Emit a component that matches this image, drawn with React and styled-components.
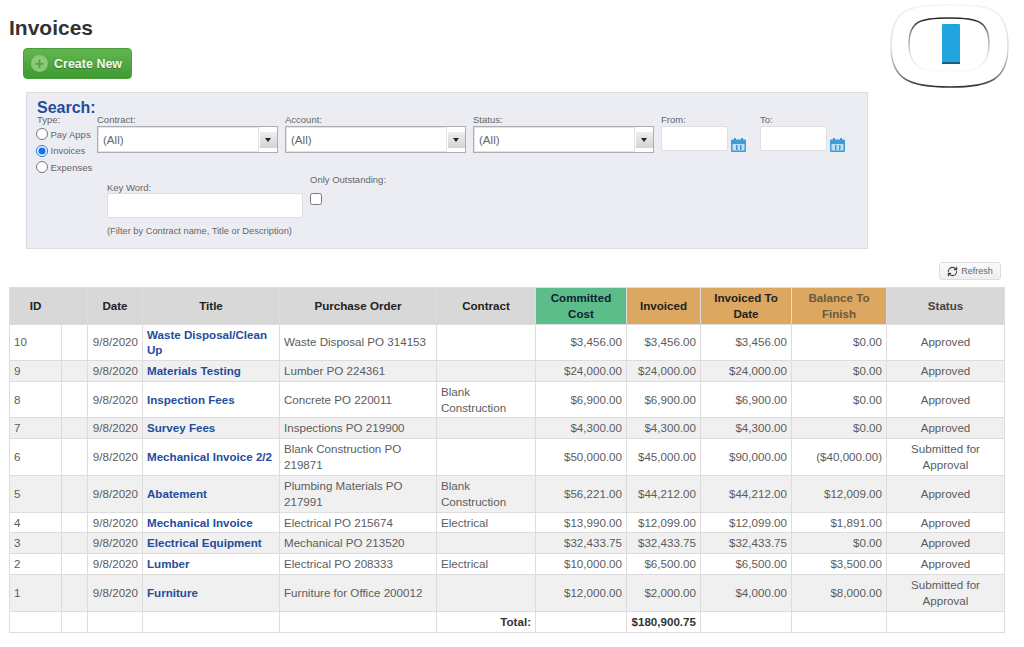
import React from 'react';
import styled, { createGlobalStyle } from 'styled-components';
import { RefreshCw } from 'lucide-react';

const GlobalStyle = createGlobalStyle`
  html, body {
    margin: 0;
    padding: 0;
    background: #fff;
  }
  body {
    font-family: "Liberation Sans", Arial, sans-serif;
    color: #555;
  }
`;

const Page = styled.div`
  width: 1024px;
  height: 647px;
  overflow: hidden;
  box-sizing: border-box;
  padding: 0 19px 0 9px;
`;

const Header = styled.header`
  display: flex;
  justify-content: space-between;
  height: 92px;
`;

const HeaderLeft = styled.div`
  display: flex;
  flex-direction: column;
  align-items: flex-start;
`;

const PageTitle = styled.h1`
  margin: 16px 0 1px;
  font-size: 21px;
  line-height: 23px;
  font-weight: bold;
  color: #333;
`;

const CreateButton = styled.button`
  display: flex;
  align-items: center;
  gap: 6px;
  width: 109px;
  height: 31px;
  margin: 8px 0 0 14px;
  padding: 0 0 0 7px;
  border: 1px solid #4b9c3d;
  border-radius: 4px;
  background: linear-gradient(#62b650, #3f9a33);
  color: #f1f8ee;
  font-family: inherit;
  font-size: 12.5px;
  font-weight: bold;
  white-space: nowrap;
  text-shadow: 0 1px 1px rgba(0, 0, 0, 0.3);
`;

const PlusCircle = styled.span`
  display: flex;
  align-items: center;
  justify-content: center;
  width: 17px;
  height: 17px;
  border-radius: 50%;
  background: #8bc87c;
  color: #4fa53e;
  font-size: 16px;
  line-height: 17px;
  font-weight: bold;
  text-shadow: none;
`;

const Logo = styled.svg`
  width: 124px;
  height: 92px;
  margin-right: -6px;
`;

const SearchPanel = styled.section`
  box-sizing: border-box;
  width: 842px;
  height: 157px;
  margin-left: 17px;
  padding: 8px 0 0 10px;
  background: #ecedf3;
  border: 1px solid #dcdde0;
`;

const TopRow = styled.div`
  display: flex;
  align-items: flex-start;
`;

const TypeColumn = styled.div`
  display: flex;
  flex-direction: column;
  width: 60px;
`;

const SearchTitle = styled.div`
  font-size: 16px;
  line-height: 13px;
  font-weight: bold;
  color: #1f4d9c;
`;

const SmallLabel = styled.label`
  display: block;
  font-size: 9.5px;
  line-height: 11px;
  white-space: nowrap;
  color: #666;
`;

const TypeLabel = styled(SmallLabel)`
  margin-bottom: 0.75px;
`;

const RadioRow = styled.label`
  display: flex;
  align-items: center;
  gap: 2.5px;
  height: 16.5px;
  margin-left: -1px;
  font-size: 9.5px;
  white-space: nowrap;
  color: #666;
`;

const Radio = styled.input`
  width: 12px;
  height: 12px;
  margin: 0;
  flex: none;
  accent-color: #1a73e8;
`;

const Field = styled.div`
  display: flex;
  flex-direction: column;
  gap: 1px;
  margin-top: 13px;
  margin-right: ${(p) => p.$gap}px;
`;

const Combo = styled.div`
  box-sizing: border-box;
  display: flex;
  align-items: center;
  width: 181px;
  height: 27px;
  background: #fff;
  border: 1px solid #aeaeb0;
`;

const ComboValue = styled.div`
  box-sizing: border-box;
  flex: 1;
  height: 25px;
  padding-left: 4px;
  font-size: 11.6px;
  line-height: 23px;
  color: #666;
  border: 1px solid #e4e4e4;
`;

const ComboArrow = styled.div`
  display: flex;
  align-items: center;
  justify-content: center;
  width: 16px;
  height: 16px;
  margin: 0 0 0 1px;
  padding-right: 1px;
  background: linear-gradient(#eee, #d4d4d4);
  &::after {
    content: '';
    border: 3.5px solid transparent;
    border-top: 4px solid #222;
    border-bottom: 0;
  }
`;

const DateRow = styled.div`
  display: flex;
  align-items: flex-end;
  gap: 3px;
`;

const TextBox = styled.input`
  box-sizing: border-box;
  display: block;
  width: ${(p) => p.$width}px;
  height: 25px;
  margin: 0;
  background: #fff;
  border: 1px solid #dfdfe2;
  border-radius: 2px;
`;

const CalendarIcon = styled.svg`
  width: 15px;
  height: 14px;
  margin-bottom: -1px;
`;

const BottomRow = styled.div`
  display: flex;
  align-items: flex-start;
  gap: 7px;
  margin: 0 0 0 70px;
`;

const KeywordField = styled.div`
  padding-top: 7px;
`;

const Hint = styled.div`
  margin-top: 8px;
  font-size: 9.3px;
  line-height: 11px;
  color: #666;
`;

const OutstandingField = styled.div`
  margin-top: -1px;
`;

const Checkbox = styled.input`
  display: block;
  width: 12px;
  height: 12px;
  margin: 8px 0 0;
`;

const RefreshBar = styled.div`
  display: flex;
  justify-content: flex-end;
  height: 38px;
  padding: 13px 4px 0 0;
  box-sizing: border-box;
`;

const RefreshButton = styled.button`
  display: flex;
  align-items: center;
  justify-content: center;
  gap: 3px;
  box-sizing: border-box;
  width: 62px;
  height: 18px;
  padding: 0;
  background: linear-gradient(#fafafa, #eee);
  border: 1px solid #ddd;
  border-radius: 3px;
  color: #666;
  font-family: inherit;
  font-size: 9px;
`;

const Table = styled.table`
  width: 995px;
  table-layout: fixed;
  border-collapse: collapse;
  font-size: 11.6px;
  line-height: 15.75px;
`;

const headBg = { plain: '#d8d8d8', green: '#5cbd8b', orange: '#dca760' };

const Th = styled.th`
  padding: 2px 4px;
  height: 31.5px;
  box-sizing: content-box;
  background: ${(p) => headBg[p.$tone]};
  color: ${(p) => p.$color};
  border: 1px solid #ddd;
  font-weight: bold;
  text-align: center;
`;

const Row = styled.tr`
  background: ${(p) => (p.$odd ? '#f0f0f0' : '#fff')};
  height: ${(p) => (p.$tall ? '37px' : 'auto')};
`;

const Td = styled.td`
  padding: 2px 4px;
  border: 1px solid #ddd;
  text-align: ${(p) => p.$align || 'left'};
  color: #5c5c5c;
`;

const TitleLink = styled.a`
  color: #1f4d9c;
  font-weight: bold;
  text-decoration: none;
`;

const TotalCell = styled(Td)`
  font-weight: bold;
  color: #333;
`;

const columns = [
  { label: 'ID', width: 52, tone: 'plain', color: '#222' },
  { label: '', width: 26, tone: 'plain', color: '#222' },
  { label: 'Date', width: 55, tone: 'plain', color: '#222' },
  { label: 'Title', width: 137, tone: 'plain', color: '#222' },
  { label: 'Purchase Order', width: 157, tone: 'plain', color: '#222' },
  { label: 'Contract', width: 99, tone: 'plain', color: '#222' },
  { label: 'Committed Cost', width: 91, tone: 'green', color: '#123' },
  { label: 'Invoiced', width: 74, tone: 'orange', color: '#222' },
  { label: 'Invoiced To Date', width: 91, tone: 'orange', color: '#222' },
  { label: 'Balance To Finish', width: 95, tone: 'orange', color: '#6a5a3c' },
  { label: 'Status', width: 118, tone: 'plain', color: '#444' },
];

const invoices = [
  ['10', 'Waste Disposal/Clean Up', 'Waste Disposal PO 314153', '', '$3,456.00', '$3,456.00', '$3,456.00', '$0.00', 'Approved'],
  ['9', 'Materials Testing', 'Lumber PO 224361', '', '$24,000.00', '$24,000.00', '$24,000.00', '$0.00', 'Approved'],
  ['8', 'Inspection Fees', 'Concrete PO 220011', 'Blank Construction', '$6,900.00', '$6,900.00', '$6,900.00', '$0.00', 'Approved'],
  ['7', 'Survey Fees', 'Inspections PO 219900', '', '$4,300.00', '$4,300.00', '$4,300.00', '$0.00', 'Approved'],
  ['6', 'Mechanical Invoice 2/2', 'Blank Construction PO 219871', '', '$50,000.00', '$45,000.00', '$90,000.00', '($40,000.00)', 'Submitted for Approval'],
  ['5', 'Abatement', 'Plumbing Materials PO 217991', 'Blank Construction', '$56,221.00', '$44,212.00', '$44,212.00', '$12,009.00', 'Approved'],
  ['4', 'Mechanical Invoice', 'Electrical PO 215674', 'Electrical', '$13,990.00', '$12,099.00', '$12,099.00', '$1,891.00', 'Approved'],
  ['3', 'Electrical Equipment', 'Mechanical PO 213520', '', '$32,433.75', '$32,433.75', '$32,433.75', '$0.00', 'Approved'],
  ['2', 'Lumber', 'Electrical PO 208333', 'Electrical', '$10,000.00', '$6,500.00', '$6,500.00', '$3,500.00', 'Approved'],
  ['1', 'Furniture', 'Furniture for Office 200012', '', '$12,000.00', '$2,000.00', '$4,000.00', '$8,000.00', 'Submitted for Approval'],
];

function Calendar() {
  return (
    <CalendarIcon viewBox="0 0 15 14">
      <rect x="0" y="1.5" width="15" height="12.5" rx="1" fill="#3c9bd8" />
      <rect x="3" y="0" width="2" height="3" fill="#3c9bd8" />
      <rect x="10" y="0" width="2" height="3" fill="#3c9bd8" />
      <rect x="1.5" y="6" width="12" height="6.5" fill="#bfe0f4" />
      <rect x="5" y="7" width="1.5" height="5" fill="#3c9bd8" />
      <rect x="9" y="7" width="1.5" height="5" fill="#3c9bd8" />
    </CalendarIcon>
  );
}

function ComboField({ label, gap }) {
  return (
    <Field $gap={gap}>
      <SmallLabel>{label}</SmallLabel>
      <Combo>
        <ComboValue>(All)</ComboValue>
        <ComboArrow />
      </Combo>
    </Field>
  );
}

function DateField({ label, gap }) {
  return (
    <Field $gap={gap}>
      <SmallLabel>{label}</SmallLabel>
      <DateRow>
        <TextBox $width={67} />
        <Calendar />
      </DateRow>
    </Field>
  );
}

function App() {
  return (
    <Page>
      <GlobalStyle />
      <Header>
        <HeaderLeft>
          <PageTitle>Invoices</PageTitle>
          <CreateButton>
            <PlusCircle>+</PlusCircle>
            Create New
          </CreateButton>
        </HeaderLeft>
        <Logo viewBox="0 0 124 92">
          <defs>
            <linearGradient id="outerRing" x1="0" y1="0" x2="0" y2="1">
              <stop offset="0" stopColor="#f4f4f4" />
              <stop offset="0.55" stopColor="#dcdcdc" />
              <stop offset="0.85" stopColor="#888" />
              <stop offset="1" stopColor="#333" />
            </linearGradient>
            <linearGradient id="innerRing" x1="0" y1="0" x2="0" y2="1">
              <stop offset="0" stopColor="#222" />
              <stop offset="0.3" stopColor="#999" />
              <stop offset="0.7" stopColor="#e4e4e4" />
              <stop offset="1" stopColor="#fafafa" />
            </linearGradient>
            <filter id="soften" x="-5%" y="-5%" width="110%" height="110%">
              <feGaussianBlur stdDeviation="0.5" />
            </filter>
          </defs>
          <g filter="url(#soften)">
            <path
              d="M63 5C23 5 4 8 4 46C4 80 23 87 63 87C103 87 121 80 121 46C121 8 103 5 63 5Z"
              fill="#fff"
              stroke="url(#outerRing)"
              strokeWidth="1.5"
            />
            <path
              d="M62 18C33 18 22 21 22 44C22 66 33 72 62 72C91 72 102 66 102 44C102 21 91 18 62 18Z"
              fill="#fff"
              stroke="url(#innerRing)"
              strokeWidth="1.5"
            />
            <rect x="55" y="24" width="18" height="40" rx="1" fill="#23a5de" />
            <rect x="55" y="62" width="18" height="2" fill="#1b5f86" />
          </g>
        </Logo>
      </Header>

      <SearchPanel>
        <TopRow>
          <TypeColumn>
            <SearchTitle>Search:</SearchTitle>
            <TypeLabel>Type:</TypeLabel>
            <RadioRow>
              <Radio type="radio" name="type" />
              Pay Apps
            </RadioRow>
            <RadioRow>
              <Radio type="radio" name="type" defaultChecked />
              Invoices
            </RadioRow>
            <RadioRow>
              <Radio type="radio" name="type" />
              Expenses
            </RadioRow>
          </TypeColumn>
          <ComboField label="Contract:" gap={7} />
          <ComboField label="Account:" gap={7} />
          <ComboField label="Status:" gap={7} />
          <DateField label="From:" gap={14} />
          <DateField label="To:" gap={0} />
        </TopRow>
        <BottomRow>
          <KeywordField>
            <SmallLabel>Key Word:</SmallLabel>
            <TextBox $width={196} />
            <Hint>(Filter by Contract name, Title or Description)</Hint>
          </KeywordField>
          <OutstandingField>
            <SmallLabel>Only Outstanding:</SmallLabel>
            <Checkbox type="checkbox" />
          </OutstandingField>
        </BottomRow>
      </SearchPanel>

      <RefreshBar>
        <RefreshButton>
          <RefreshCw size={11} color="#444" strokeWidth={2.5} />
          Refresh
        </RefreshButton>
      </RefreshBar>

      <Table>
        <colgroup>
          {columns.map((col) => (
            <col key={col.label} width={col.width} />
          ))}
        </colgroup>
        <thead>
          <tr>
            {columns.map((col) => (
              <Th key={col.label} $tone={col.tone} $color={col.color}>
                {col.label}
              </Th>
            ))}
          </tr>
        </thead>
        <tbody>
          {invoices.map((inv, i) => (
            <Row key={inv[0]} $odd={i % 2 === 1} $tall={inv[8] !== 'Approved'}>
              <Td>{inv[0]}</Td>
              <Td />
              <Td $align="right">9/8/2020</Td>
              <Td>
                <TitleLink href="#">{inv[1]}</TitleLink>
              </Td>
              <Td>{inv[2]}</Td>
              <Td>{inv[3]}</Td>
              <Td $align="right">{inv[4]}</Td>
              <Td $align="right">{inv[5]}</Td>
              <Td $align="right">{inv[6]}</Td>
              <Td $align="right">{inv[7]}</Td>
              <Td $align="center">{inv[8]}</Td>
            </Row>
          ))}
          <Row>
            <Td />
            <Td />
            <Td />
            <Td />
            <Td />
            <TotalCell $align="right">Total:</TotalCell>
            <Td />
            <TotalCell $align="right">$180,900.75</TotalCell>
            <Td />
            <Td />
            <Td />
          </Row>
        </tbody>
      </Table>
    </Page>
  );
}

export default App;
